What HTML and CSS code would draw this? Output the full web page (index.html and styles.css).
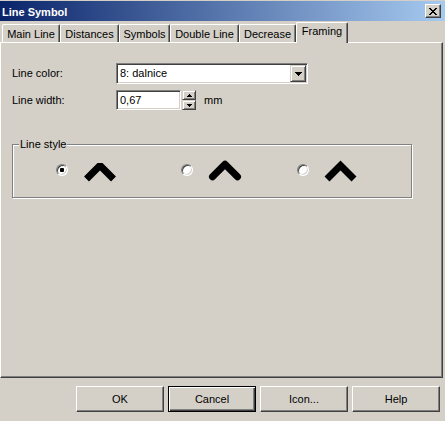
FILE: index.html
```html
<!DOCTYPE html>
<html>
<head>
<meta charset="utf-8">
<title>Line Symbol</title>
<link rel="stylesheet" href="styles.css">
</head>
<body>
<div class="dialog">
  <div class="titlebar">
    <span class="title">Line Symbol</span>
    <span class="close">
      <svg width="8" height="7" viewBox="0 0 8 7" shape-rendering="crispEdges"><path d="M0 0h2v1h-2zM6 0h2v1h-2zM1 1h2v1h-2zM5 1h2v1h-2zM2 2h4v1h-4zM3 3h2v1h-2zM2 4h4v1h-4zM1 5h2v1h-2zM5 5h2v1h-2zM0 6h2v1h-2zM6 6h2v1h-2z" fill="#000"/></svg>
    </span>
  </div>
  <div class="tabs">
    <div class="tab t-main">Main Line</div>
    <div class="tab t-dist">Distances</div>
    <div class="tab t-sym">Symbols</div>
    <div class="tab t-dbl">Double Line</div>
    <div class="tab t-dec">Decrease</div>
    <div class="tab t-frm selected">Framing</div>
  </div>
  <div class="panel">
    <div class="row row-color">
      <span class="label">Line color:</span>
      <div class="combo">
        <span class="combo-text">8: dalnice</span>
        <span class="combo-btn"><svg width="7" height="4" viewBox="0 0 7 4" shape-rendering="crispEdges"><path d="M0 0h7v1h-7zM1 1h5v1h-5zM2 2h3v1h-3zM3 3h1v1h-1z" fill="#000"/></svg></span>
      </div>
    </div>
    <div class="row row-width">
      <span class="label">Line width:</span>
      <div class="edit">0,67</div>
      <div class="spin">
        <span class="spin-btn"><svg width="5" height="3" viewBox="0 0 5 3" shape-rendering="crispEdges"><path d="M2 0h1v1h-1zM1 1h3v1h-3zM0 2h5v1h-5z" fill="#000"/></svg></span>
        <span class="spin-btn"><svg width="5" height="3" viewBox="0 0 5 3" shape-rendering="crispEdges"><path d="M0 0h5v1h-5zM1 1h3v1h-3zM2 2h1v1h-1z" fill="#000"/></svg></span>
      </div>
      <span class="unit">mm</span>
    </div>
    <div class="group">
      <span class="legend">Line style</span>
      <div class="options">
        <div class="option opt1">
          <span class="radio checked"></span>
          <svg class="chev" width="40" height="28" viewBox="0 0 40 28"><path d="M6.5 21 L20 7.5 L33.5 21" fill="none" stroke="#000" stroke-width="7" stroke-linejoin="bevel" stroke-linecap="butt"/></svg>
        </div>
        <div class="option opt2">
          <span class="radio"></span>
          <svg class="chev" width="40" height="28" viewBox="0 0 40 28"><path d="M7.5 18.7 L20 6.2 L32.5 18.7" fill="none" stroke="#000" stroke-width="7" stroke-linejoin="round" stroke-linecap="round"/></svg>
        </div>
        <div class="option opt3">
          <span class="radio"></span>
          <svg class="chev" width="40" height="28" viewBox="0 0 40 28"><path d="M6 21 L19.5 7.5 L33 21" fill="none" stroke="#000" stroke-width="7" stroke-linejoin="miter" stroke-miterlimit="10" stroke-linecap="butt"/></svg>
        </div>
      </div>
    </div>
  </div>
  <div class="buttons">
    <div class="btn">OK</div>
    <div class="btn default">Cancel</div>
    <div class="btn">Icon...</div>
    <div class="btn">Help</div>
  </div>
</div>
</body>
</html>
```
FILE: styles.css
```css
* { box-sizing: border-box; }
html, body {
  margin: 0;
  padding: 0;
}
body {
  width: 445px;
  height: 421px;
  overflow: hidden;
  background: #d4d0c8;
  font-family: "Liberation Sans", Arial, sans-serif;
  font-size: 11px;
  color: #000;
}
.dialog {
  width: 445px;
  height: 421px;
  display: flex;
  flex-direction: column;
}
.titlebar {
  margin-top: 1px;
  height: 20px;
  background: linear-gradient(to right, #0a246a, #a6caf0);
  display: flex;
  justify-content: space-between;
  padding: 0 4px 0 2px;
}
.title {
  color: #fff;
  font-weight: bold;
  line-height: 13px;
  margin-top: 5px;
}
.close {
  width: 16px;
  height: 14px;
  margin-top: 3px;
  background: #d4d0c8;
  border: 1px solid;
  border-color: #fff #404040 #404040 #fff;
  box-shadow: inset -1px -1px #808080;
  display: flex;
  align-items: center;
  justify-content: center;
  padding-left: 0;
}
.close svg { display: block; margin-left: -1px; }
.tabs {
  margin-top: 1px;
  height: 20px;
  display: flex;
  align-items: flex-end;
  padding-left: 2px;
}
.tab {
  height: 18px;
  border-top: 1px solid #fff;
  border-left: 1px solid #fff;
  border-right: 1px solid #404040;
  border-top-left-radius: 2px;
  border-top-right-radius: 2px;
  box-shadow: inset -1px 0 #808080;
  display: flex;
  align-items: center;
  justify-content: center;
  line-height: 13px;
  padding-top: 1px;
}
.t-main { width: 58px; }
.t-dist { width: 59px; }
.t-sym { width: 51px; }
.t-dbl { width: 69px; }
.t-dec { width: 57px; }
.t-frm { width: 52px; }
.tab.selected {
  height: 21px;
  margin-bottom: -1px;
  position: relative;
  z-index: 1;
  background: #d4d0c8;
  padding-top: 0;
  padding-bottom: 3px;
}
.panel {
  width: 443px;
  height: 336px;
  border: 1px solid;
  border-color: #fff #404040 #404040 #fff;
  box-shadow: inset -1px -1px #808080;
  padding: 20px 0 0 11px;
}
.row {
  display: flex;
  align-items: center;
}
.row-width { margin-top: 6px; }
.label {
  width: 104px;
  line-height: 13px;
}
.combo, .edit {
  background: #fff;
  border: 1px solid;
  border-color: #808080 #fff #fff #808080;
  box-shadow: inset 1px 1px #404040, inset -1px -1px #d4d0c8;
}
.combo {
  width: 192px;
  height: 21px;
  display: flex;
  align-items: center;
  justify-content: space-between;
  padding: 1px;
}
.combo-text {
  padding-left: 2px;
  line-height: 13px;
}
.combo-btn {
  width: 16px;
  height: 17px;
  background: #d4d0c8;
  border: 1px solid;
  border-color: #d4d0c8 #404040 #404040 #d4d0c8;
  box-shadow: inset 1px 1px #fff, inset -1px -1px #808080;
  display: flex;
  align-items: center;
  justify-content: center;
}
.combo-btn svg { display: block; }
.edit {
  width: 65px;
  height: 20px;
  padding-left: 3px;
  line-height: 18px;
}
.spin {
  margin-left: 1px;
  width: 14px;
  height: 20px;
  display: flex;
  flex-direction: column;
}
.spin-btn {
  height: 10px;
  background: #d4d0c8;
  border: 1px solid;
  border-color: #d4d0c8 #404040 #404040 #d4d0c8;
  box-shadow: inset 1px 1px #fff, inset -1px -1px #808080;
  display: flex;
  align-items: center;
  justify-content: center;
}
.spin-btn svg { display: block; }
.unit {
  margin-left: 8px;
  line-height: 13px;
}
.group {
  position: relative;
  margin-top: 34px;
  width: 400px;
  height: 54px;
  border: 1px solid #808080;
  box-shadow: inset 1px 1px #fff, 1px 1px #fff;
  padding: 13px 0 0 43px;
}
.legend {
  position: absolute;
  top: -7px;
  left: 6px;
  padding: 0 1px;
  background: #d4d0c8;
  line-height: 13px;
}
.options {
  display: flex;
}
.option {
  display: flex;
  align-items: flex-start;
}
.opt1 { width: 125px; }
.opt2 { width: 116px; }
.radio {
  width: 12px;
  height: 12px;
  margin-top: 6px;
  border-radius: 50%;
  background: #fff;
  border: 1px solid;
  border-color: #808080 #fff #fff #808080;
  box-shadow: inset 1px 1px #404040, inset -1px -1px #d4d0c8;
  display: flex;
  align-items: center;
  justify-content: center;
}
.radio.checked::after {
  content: "";
  width: 4px;
  height: 4px;
  border-radius: 1px;
  background: #000;
}
.chev {
  display: block;
  margin-left: 12px;
}
.buttons {
  margin-top: 8px;
  display: flex;
  gap: 4px;
  padding-left: 76px;
}
.btn {
  width: 88px;
  height: 26px;
  border: 1px solid;
  border-color: #fff #404040 #404040 #fff;
  box-shadow: inset -1px -1px #808080;
  display: flex;
  align-items: center;
  justify-content: center;
  line-height: 13px;
}
.btn.default {
  border-color: #000;
  box-shadow: inset 1px 1px #fff, inset -1px -1px #404040, inset -2px -2px #808080;
}
```
